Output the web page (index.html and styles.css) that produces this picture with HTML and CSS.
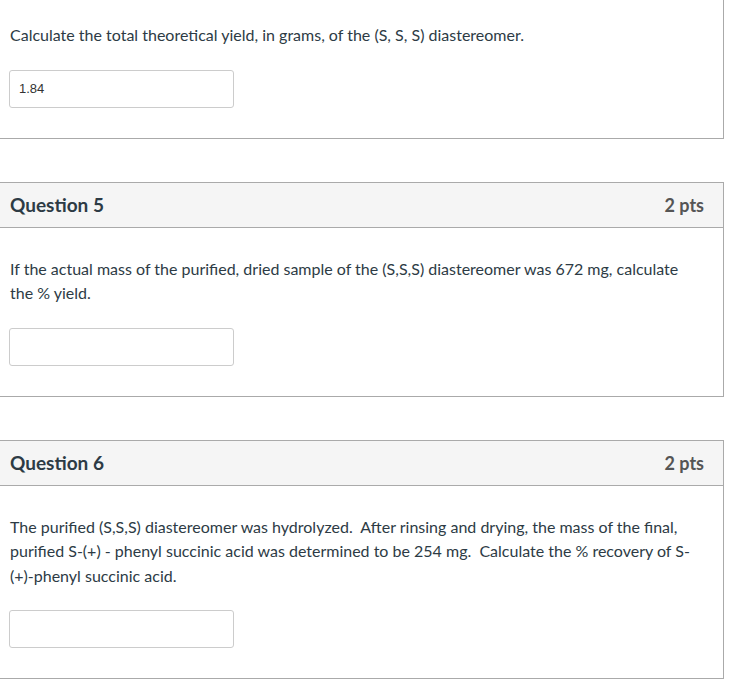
FILE: index.html
```html
<!DOCTYPE html>
<html>
<head>
<meta charset="utf-8">
<link rel="stylesheet" href="styles.css">
</head>
<body>
<div class="page">
  <div class="question first">
    <div class="body">
      <p class="text">Calculate the total theoretical yield, in grams, of the (S, S, S) diastereomer.</p>
      <div class="answer"><input class="field" type="text" value="1.84"></div>
    </div>
  </div>

  <div class="question">
    <div class="header">
      <span class="name">Question 5</span>
      <span class="points">2 pts</span>
    </div>
    <div class="body">
      <p class="text">If the actual mass of the purified, dried sample of the (S,S,S) diastereomer was 672 mg, calculate the % yield.</p>
      <div class="answer"><input class="field" type="text" value=""></div>
    </div>
  </div>

  <div class="question">
    <div class="header">
      <span class="name">Question 6</span>
      <span class="points">2 pts</span>
    </div>
    <div class="body">
      <p class="text">The purified (S,S,S) diastereomer was hydrolyzed.&nbsp; After rinsing and drying, the mass of the final, purified S-(+) - phenyl succinic acid was determined to be 254 mg.&nbsp; Calculate the % recovery of S-(+)-phenyl succinic acid.</p>
      <div class="answer"><input class="field" type="text" value=""></div>
    </div>
  </div>
</div>
</body>
</html>
```

FILE: styles.css
```css
html, body {
  margin: 0;
  padding: 0;
  background: #ffffff;
}

body {
  font-family: Lato, "Open Sans", sans-serif;
  color: #2d3b45;
}

.page {
  width: 725px;
  margin: -7px 0 0 -1px;
  display: flex;
  flex-direction: column;
  gap: 43px;
}

.question {
  border: 1px solid #aaaaaa;
  background: #ffffff;
}

.header {
  display: flex;
  justify-content: space-between;
  align-items: center;
  height: 44px;
  padding: 0 19px 0 10px;
  background: #f5f5f5;
  border-bottom: 1px solid #aaaaaa;
  font-size: 19px;
  font-weight: 700;
}

.name {
  color: #2d3b45;
}

.points {
  color: #555555;
  font-size: 18px;
}

.body {
  padding: 29px 20px 30px 10px;
}

.text {
  margin: 0;
  font-size: 16px;
  line-height: 24.5px;
}

.answer {
  margin-top: 22px;
  display: flex;
}

.field {
  box-sizing: border-box;
  width: 225px;
  height: 38px;
  margin: 0 0 0 -1px;
  padding: 0 9px;
  border: 1px solid #cccccc;
  border-radius: 3px;
  font-family: "Liberation Sans", Arial, sans-serif;
  font-size: 13px;
  color: #333333;
  background: #ffffff;
  outline: none;
}
```
